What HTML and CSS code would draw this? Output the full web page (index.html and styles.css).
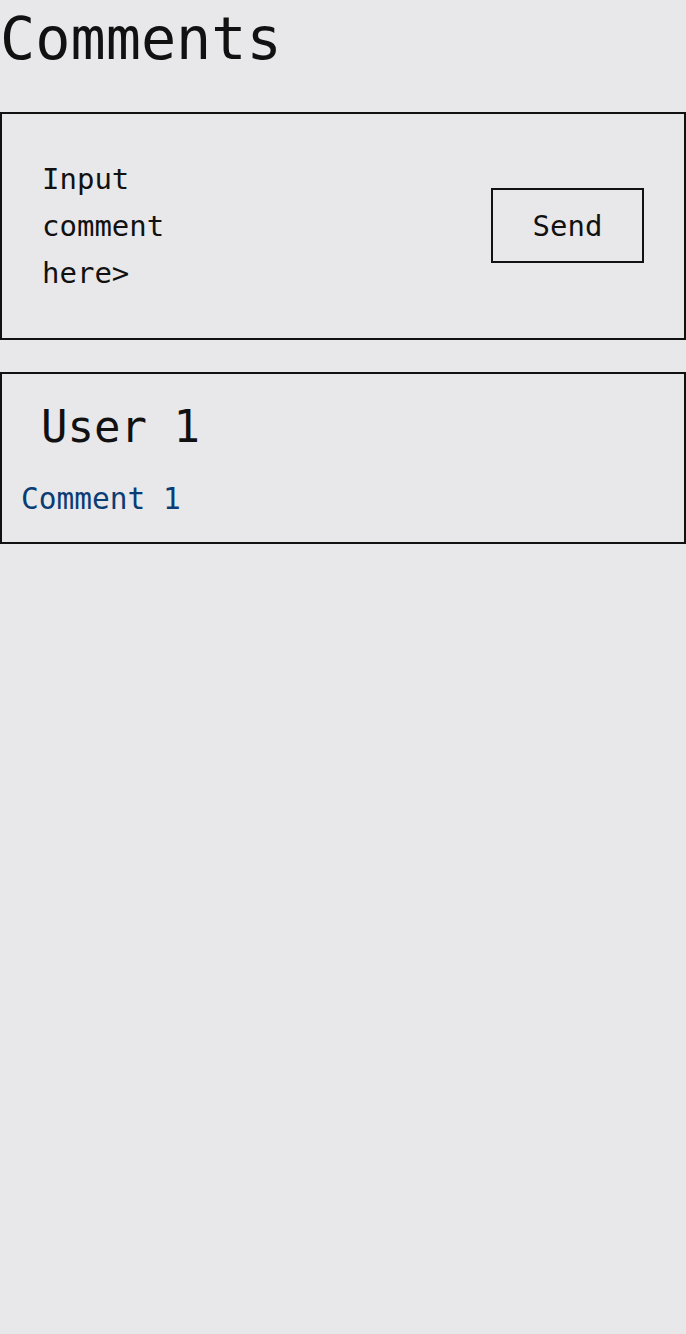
FILE: index.html
```html
<!DOCTYPE html>
<html>
<head>
<meta charset="utf-8">
<link rel="stylesheet" href="styles.css">
</head>
<body>
<h1 class="title">Comments</h1>
<section class="composer">
  <div class="input-text">Input comment here&gt;</div>
  <button class="send">Send</button>
</section>
<section class="comment-card">
  <div class="user">User 1</div>
  <div class="comment">Comment 1</div>
</section>
</body>
</html>
```
FILE: styles.css
```css
html, body {
  margin: 0;
  padding: 0;
  background: #e8e8ea;
}
body {
  font-family: "DejaVu Sans Mono", monospace;
  color: #111;
}
.title {
  margin: 6px 0 39px 0;
  font-size: 58.5px;
  font-weight: normal;
  line-height: 67px;
}
.composer {
  height: 224px;
  border: 2px solid #111;
  display: flex;
  align-items: center;
  justify-content: space-between;
  padding: 0 40px 0 40px;
  box-sizing: content-box;
}
.input-text {
  font-size: 29px;
  line-height: 47px;
  width: 150px;
}
.send {
  width: 153px;
  height: 75px;
  box-sizing: border-box;
  border: 2px solid #111;
  background: transparent;
  font-family: "DejaVu Sans Mono", monospace;
  font-size: 29px;
  color: #111;
  padding: 0;
  margin-top: -1px;
}
.comment-card {
  margin-top: 32px;
  border: 2px solid #111;
  padding: 27px 0 26px 19px;
}
.user {
  margin-left: 20px;
  font-size: 44px;
  line-height: 51px;
}
.comment {
  margin-top: 31px;
  font-size: 29.5px;
  line-height: 33px;
  color: #0b3c74;
}
```
